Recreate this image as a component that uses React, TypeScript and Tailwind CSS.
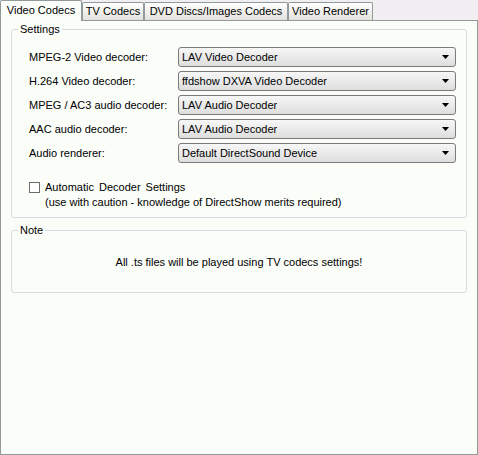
import React from 'react'

const TABS: [string, string][] = [
  ['Video Codecs', 'w-[82px]'],
  ['TV Codecs', 'w-[62px]'],
  ['DVD Discs/Images Codecs', 'w-[144px]'],
  ['Video Renderer', 'w-[85px]'],
]

const ROWS: [string, string][] = [
  ['MPEG-2 Video decoder:', 'LAV Video Decoder'],
  ['H.264 Video decoder:', 'ffdshow DXVA Video Decoder'],
  ['MPEG / AC3 audio decoder:', 'LAV Audio Decoder'],
  ['AAC audio decoder:', 'LAV Audio Decoder'],
  ['Audio renderer:', 'Default DirectSound Device'],
]

function Combo({ value }: { value: string }) {
  return (
    <div className="w-[278px] h-[20px] flex items-center justify-between rounded-[3px] border border-[#7b7b7b] bg-gradient-to-b from-[#f7f7f7] to-[#dedede] pl-[3px] pr-[6px]">
      <span className="leading-none">{value}</span>
      <svg width="7" height="4" viewBox="0 0 7 4">
        <path d="M0 0h7L3.5 4z" fill="#000" />
      </svg>
    </div>
  )
}

function GroupBox({ title, className, children }: { title: string; className: string; children: React.ReactNode }) {
  return (
    <div className={`relative mx-[10px] rounded-[3px] border border-[#d3dce1] ${className}`}>
      <span className="absolute left-[6px] -top-[7px] px-[2px] bg-[#fbfdf9] leading-[13px]">{title}</span>
      {children}
    </div>
  )
}

export default function App() {
  return (
    <div
      className="w-[478px] h-[455px] flex flex-col bg-[#f1eff2] text-[11px] text-black"
      style={{ fontFamily: '"Liberation Sans", Arial, sans-serif' }}
    >
      <div className="flex items-end h-[20px] relative z-10">
        {TABS.map(([t, w], i) =>
          i === 0 ? (
            <div
              key={t}
              className={`${w} h-[21px] -mb-px pt-[3px] text-center bg-[#fbfdf9] border border-b-0 border-[#919b9c] rounded-t-[2px] leading-[13px]`}
            >
              {t}
            </div>
          ) : (
            <div
              key={t}
              className={`${w} h-[18px] pt-[2px] text-center whitespace-nowrap bg-gradient-to-b from-[#ffffff] to-[#e3e2dc] border border-b-0 border-[#919b9c] rounded-t-[2px] leading-[13px]`}
            >
              {t}
            </div>
          )
        )}
      </div>

      <div className="flex-1 border border-[#919b9c] bg-[#fbfdf9] pt-[8px]">
        <GroupBox title="Settings" className="h-[189px] pt-[17px]">
          <div className="flex flex-col gap-[4px]">
            {ROWS.map(([label, value], i) => (
              <div key={i} className="flex items-center h-[20px] pl-[17px]">
                <span className="w-[149px]">{label}</span>
                <Combo value={value} />
              </div>
            ))}
          </div>
          <div className="flex items-start pl-[17px] mt-[17px]">
            <div className="w-[11px] h-[11px] mt-[2px] border border-[#6d6d6d] bg-white" />
            <div className="ml-[5px] leading-[15px]">
              <div className="[word-spacing:2px]">Automatic Decoder Settings</div>
              <div>(use with caution - knowledge of DirectShow merits required)</div>
            </div>
          </div>
        </GroupBox>

        <GroupBox title="Note" className="h-[63px] mt-[12px] flex items-center justify-center">
          <span className="pt-[1px]">All .ts files will be played using TV codecs settings!</span>
        </GroupBox>
      </div>
    </div>
  )
}
